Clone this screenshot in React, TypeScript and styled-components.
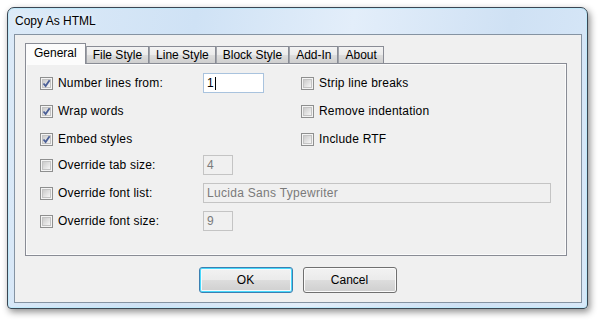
import styled, { createGlobalStyle } from 'styled-components'

const GlobalStyle = createGlobalStyle`
	html, body {
		margin: 0;
		padding: 0;
		background: #ffffff;
	}
	body {
		font-family: 'Liberation Sans', Arial, sans-serif;
		font-size: 12px;
		color: #000;
	}
`

const Page = styled.div`
	width: 598px;
	height: 321px;
	padding: 7px 0 0 7px;
	box-sizing: border-box;
`

const Window = styled.div`
	width: 581px;
	height: 302px;
	box-sizing: border-box;
	display: flex;
	flex-direction: column;
	border: 1px solid #3a4653;
	border-radius: 7px 7px 4px 4px;
	background: linear-gradient(
		100deg,
		#dceaf8 0%,
		#cfe2f5 30%,
		#e3eefa 55%,
		#cfe1f4 80%,
		#d8e8f8 100%
	);
	box-shadow:
		inset 0 0 0 1px #bfe9fa,
		2px 3px 7px rgba(0, 0, 0, 0.45);
`

const TitleBar = styled.div`
	height: 26px;
	display: flex;
	align-items: center;
	padding: 0 0 0 7px;
	font-size: 12px;
	color: #000;
	text-shadow: 0 0 6px #fff;
`

const Client = styled.div`
	flex: 1;
	margin: 0 5px 5px 6px;
	border: 1px solid #8593a2;
	background: #f0f0f0;
	display: flex;
	flex-direction: column;
	padding: 8px 14px 9px 10px;
	box-sizing: border-box;
`

const TabStrip = styled.div`
	display: flex;
	align-items: flex-end;
	height: 21px;
	margin-bottom: -1px;
	position: relative;
	z-index: 1;
`

const Tab = styled.div<{ $active?: boolean }>`
	box-sizing: border-box;
	display: flex;
	align-items: center;
	justify-content: center;
	border: 1px solid #898c95;
	border-bottom: none;
	white-space: nowrap;
	${(p) =>
		p.$active
			? `
		height: 21px;
		padding: 0 8px 2px;
		background: #fcfcfc;
	`
			: `
		height: 17px;
		margin-bottom: 1px;
		padding: 0 6px;
		background: linear-gradient(#f3f3f3 0%, #ebebeb 50%, #dddddd 51%, #cfcfcf 100%);
		border-left-color: #a0a3aa;
	`}
`

const Panel = styled.div`
	height: 193px;
	box-sizing: border-box;
	border: 1px solid #898c95;
	box-shadow: inset 0 0 0 1px #fcfcfc;
	background: #f0f0f0;
	padding: 5px 0 0 14px;
	display: flex;
	flex-direction: column;
`

const TopGrid = styled.div`
	display: grid;
	grid-template-columns: 261px 1fr;
	grid-template-rows: repeat(3, 28px);
	grid-auto-flow: column;
`

const BottomRows = styled.div`
	display: flex;
	flex-direction: column;
	margin-top: -2px;
`

const Row = styled.div`
	display: flex;
	align-items: center;
	height: 28px;
	letter-spacing: 0.2px;
`

const LabelCell = styled.label<{ $width?: number }>`
	display: flex;
	align-items: center;
	gap: 5px;
	width: ${(p) => (p.$width ? `${p.$width}px` : 'auto')};
	flex-shrink: 0;
`

const Box = styled.span`
	width: 13px;
	height: 13px;
	box-sizing: border-box;
	border: 1px solid #8e8f8f;
	background: #f4f4f4;
	display: flex;
	align-items: center;
	justify-content: center;
	position: relative;
	&::before {
		content: '';
		position: absolute;
		inset: 1px;
		background: linear-gradient(135deg, #cbcbcb 0%, #e4e4e4 60%, #f6f6f6 100%);
		border: 1px solid #c3c3c3;
		box-sizing: border-box;
	}
`

const Field = styled.div<{ $width: number; $disabled?: boolean; $focused?: boolean }>`
	width: ${(p) => p.$width}px;
	height: 20px;
	box-sizing: border-box;
	display: flex;
	align-items: center;
	padding: 0 3px;
	border: 1px solid ${(p) => (p.$focused ? '#a9c3de' : '#c4c4c4')};
	background: ${(p) => (p.$disabled ? '#f0f0f0' : '#ffffff')};
	color: ${(p) => (p.$disabled ? '#7a7a7a' : '#000')};
	letter-spacing: 0.3px;
`

const Caret = styled.span`
	display: inline-block;
	width: 1px;
	height: 13px;
	margin-left: 1px;
	background: #000;
`

const ButtonRow = styled.div`
	display: flex;
	justify-content: center;
	gap: 10px;
	margin-top: 11px;
	padding-left: 3px;
`

const Button = styled.div<{ $default?: boolean }>`
	width: 94px;
	height: 26px;
	box-sizing: border-box;
	display: flex;
	align-items: center;
	justify-content: center;
	border-radius: 3px;
	border: 1px solid ${(p) => (p.$default ? '#3c7fb1' : '#707070')};
	background: linear-gradient(#f2f2f2 0%, #ebebeb 48%, #dddddd 50%, #cfcfcf 100%);
	box-shadow: ${(p) =>
		p.$default
			? 'inset 0 0 0 1px #48d8fb, inset 0 0 0 2px #f4f8fb'
			: 'inset 0 0 0 1px #fbfbfb'};
	font-size: 12px;
`

const Check = ({ checked }: { checked?: boolean }) => (
	<Box>
		{checked && (
			<svg
				width="9"
				height="9"
				viewBox="0 0 9 9"
				style={{ position: 'relative', zIndex: 1 }}
			>
				<path
					d="M1.5 4.5 L3.6 7 L7.6 1.2"
					fill="none"
					stroke="#4a5f97"
					strokeWidth="1.8"
				/>
			</svg>
		)}
	</Box>
)

const tabs = ['General', 'File Style', 'Line Style', 'Block Style', 'Add-In', 'About']

export default function App() {
	return (
		<>
			<GlobalStyle />
			<Page>
				<Window>
					<TitleBar>Copy As HTML</TitleBar>
					<Client>
						<TabStrip>
							{tabs.map((t, i) => (
								<Tab key={t} $active={i === 0}>
									{t}
								</Tab>
							))}
						</TabStrip>
						<Panel>
							<TopGrid>
								<Row>
									<LabelCell $width={163}>
										<Check checked />
										Number lines from:
									</LabelCell>
									<Field $width={61} $focused>
										1<Caret />
									</Field>
								</Row>
								<Row>
									<LabelCell>
										<Check checked />
										Wrap words
									</LabelCell>
								</Row>
								<Row>
									<LabelCell>
										<Check checked />
										Embed styles
									</LabelCell>
								</Row>
								<Row>
									<LabelCell>
										<Check />
										Strip line breaks
									</LabelCell>
								</Row>
								<Row>
									<LabelCell>
										<Check />
										Remove indentation
									</LabelCell>
								</Row>
								<Row>
									<LabelCell>
										<Check />
										Include RTF
									</LabelCell>
								</Row>
							</TopGrid>
							<BottomRows>
								<Row>
									<LabelCell $width={163}>
										<Check />
										Override tab size:
									</LabelCell>
									<Field $width={30} $disabled>
										4
									</Field>
								</Row>
								<Row>
									<LabelCell $width={163}>
										<Check />
										Override font list:
									</LabelCell>
									<Field $width={348} $disabled>
										Lucida Sans Typewriter
									</Field>
								</Row>
								<Row>
									<LabelCell $width={163}>
										<Check />
										Override font size:
									</LabelCell>
									<Field $width={30} $disabled>
										9
									</Field>
								</Row>
							</BottomRows>
						</Panel>
						<ButtonRow>
							<Button $default>OK</Button>
							<Button>Cancel</Button>
						</ButtonRow>
					</Client>
				</Window>
			</Page>
		</>
	)
}
